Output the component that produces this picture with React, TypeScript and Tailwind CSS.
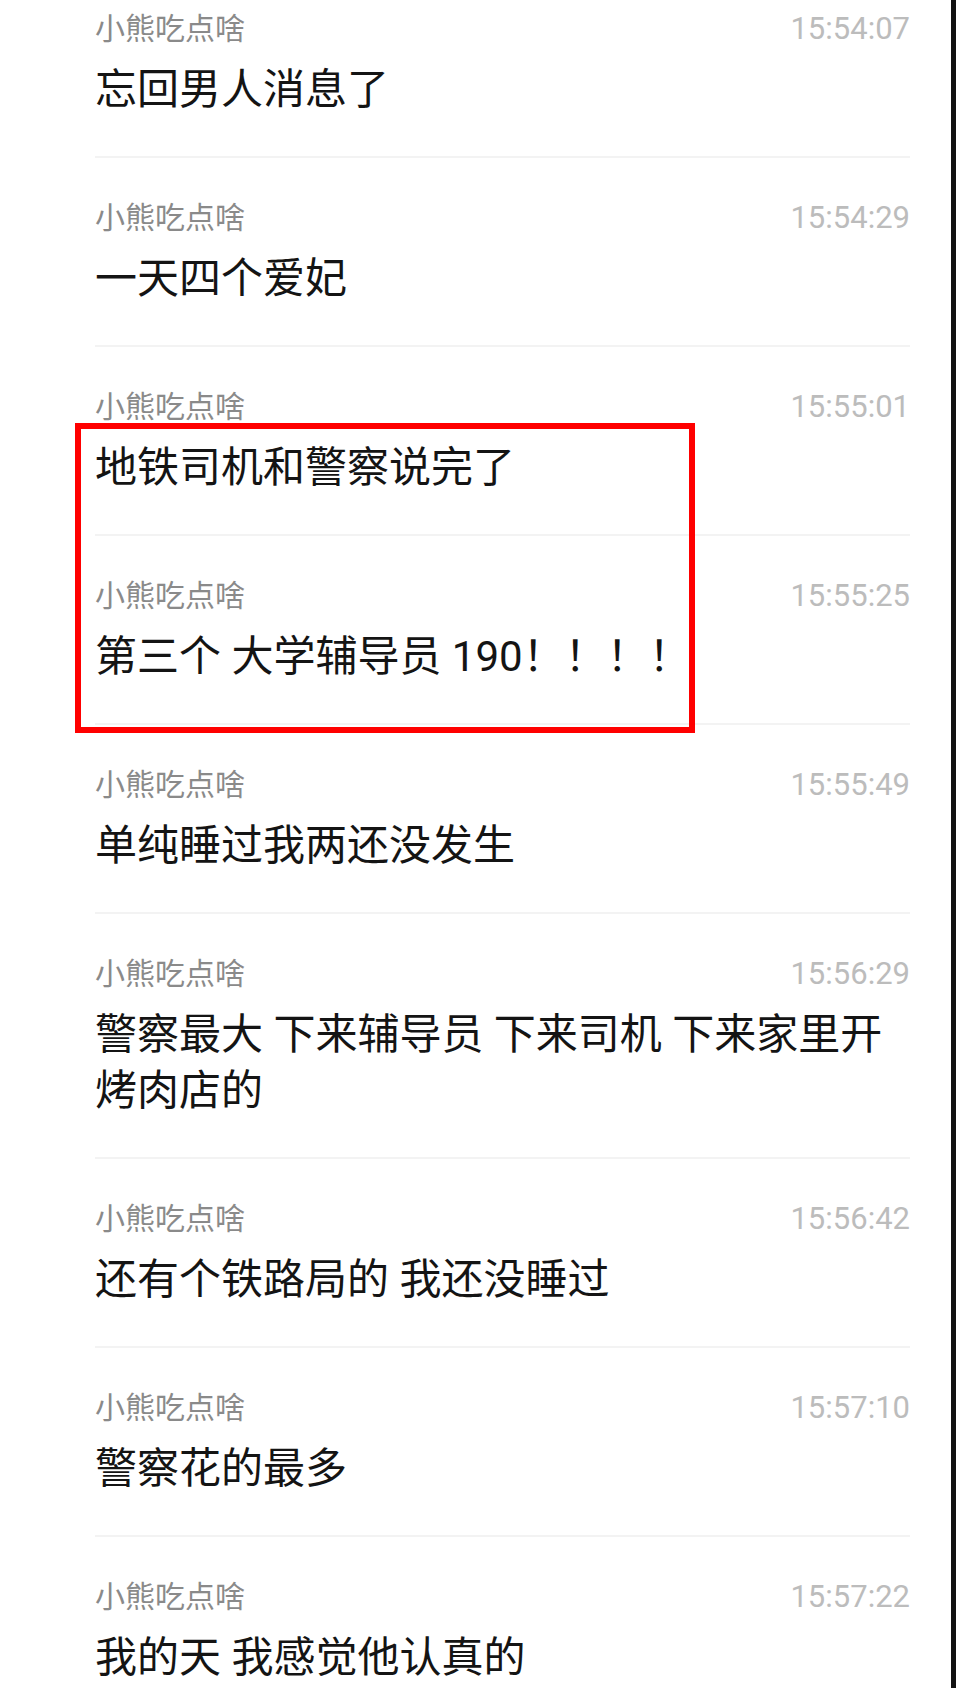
const messages = [
  { time: '15:54:07', text: '忘回男人消息了' },
  { time: '15:54:29', text: '一天四个爱妃' },
  { time: '15:55:01', text: '地铁司机和警察说完了' },
  { time: '15:55:25', text: '第三个 大学辅导员 190！！！！' },
  { time: '15:55:49', text: '单纯睡过我两还没发生' },
  { time: '15:56:29', text: '警察最大 下来辅导员 下来司机 下来家里开烤肉店的' },
  { time: '15:56:42', text: '还有个铁路局的 我还没睡过' },
  { time: '15:57:10', text: '警察花的最多' },
  { time: '15:57:22', text: '我的天 我感觉他认真的' },
]

const cjk = "font-['Roboto','Noto_Sans_CJK_SC',sans-serif]"

export default function App() {
  return (
    <div className="relative flex h-[1688px] w-[956px] overflow-hidden bg-white">
      <div className="w-[951px] bg-white">
        {/* chat history list, scrolled so the first item is cut at the top */}
        <div className="-mt-[31px] pl-[95px] pr-[41px]">
          {messages.map((m) => (
            <div key={m.time} className="border-b-2 border-[#f3f3f3] pt-[40px] pb-[38px]">
              <div className="flex h-[40px] items-center justify-between">
                <span className={`${cjk} text-[30px] leading-[40px] text-[#8a8a8a]`}>小熊吃点啥</span>
                <span className="font-['Roboto',sans-serif] text-[31px] leading-[40px] font-normal text-[#bcbcbc]">
                  {m.time}
                </span>
              </div>
              <p className={`${cjk} mt-[13px] text-[42px] leading-[56px] text-[#141414] [text-spacing-trim:space-all]`}>
                {m.text}
              </p>
            </div>
          ))}
        </div>
      </div>
      <div className="flex-1 bg-[#121212]" />

      {/* red highlight box */}
      <div className="absolute top-[423px] left-[75px] h-[310px] w-[620px] border-[6px] border-[#ff0000]" />
    </div>
  )
}
